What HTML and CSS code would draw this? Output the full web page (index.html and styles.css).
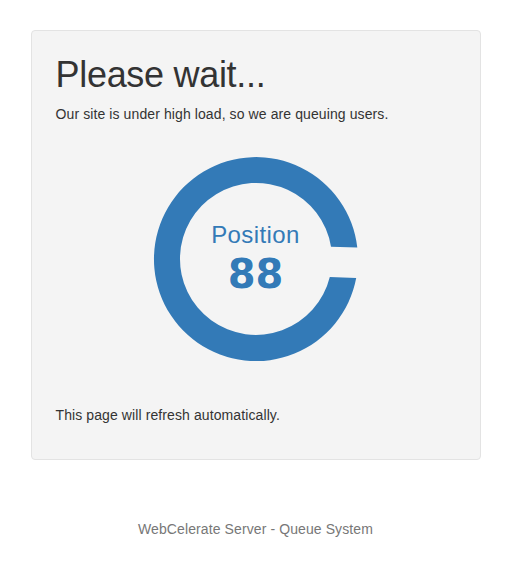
FILE: index.html
```html
<!DOCTYPE html>
<html lang="en">
<head>
    <meta charset="UTF-8">
    <meta name="viewport" content="width=device-width, initial-scale=1.0">
    <title>Please wait...</title>
    <link rel="stylesheet" href="styles.css">
</head>
<body>
    <div class="container">
        <div class="well">
            <h1>Please wait...</h1>
            <p>Our site is under high load, so we are queuing users.</p>

            <div class="queue">
                <svg class="ring" width="210" height="210" viewBox="0 0 210 210">
                    <path d="M206.3 93.5 A102 102 0 1 0 205.2 124 L178.8 123 A76 76 0 1 1 180 92.7 Z" fill="#337ab7"/>
                </svg>
                <div class="queue-label">
                    <div class="queue-title">Position</div>
                    <div class="queue-number">88</div>
                </div>
            </div>

            <p>This page will refresh automatically.</p>
        </div>
        <div class="footer">WebCelerate Server - Queue System</div>
    </div>
</body>
</html>
```

FILE: styles.css
```css
body {
    margin: 0;
    padding: 0;
    font-family: "Liberation Sans", Arial, sans-serif;
    font-size: 14px;
    line-height: 20px;
    letter-spacing: 0.1px;
    color: #333;
    background-color: #fff;
}

.container {
    width: 450px;
    margin: 0 auto;
    padding-top: 30px;
}

.well {
    background-color: #f4f4f4;
    border: 1px solid #e3e3e3;
    border-radius: 4px;
    padding: 24px;
}

.well h1 {
    margin: 0 0 9px 0;
    font-size: 36px;
    font-weight: 400;
    line-height: 1.1;
    letter-spacing: -0.3px;
}

.well p {
    margin: 0 0 10px 0;
}

.queue {
    display: grid;
    justify-content: center;
    margin: 30px 0 41px 0;
}

.ring,
.queue-label {
    grid-area: 1 / 1;
}

.queue-label {
    display: flex;
    flex-direction: column;
    align-items: center;
    color: #337ab7;
    padding-top: 67px;
    letter-spacing: 0;
}

.queue-title {
    font-size: 24px;
    line-height: 28px;
    letter-spacing: 0.4px;
}

.queue-number {
    margin-top: 5px;
    font-family: "DejaVu Sans", sans-serif;
    font-size: 40px;
    font-weight: 700;
    line-height: 40px;
    text-shadow: 0 0 2px #fff;
}

.footer {
    margin-top: 59px;
    text-align: center;
    color: #777;
}
```
